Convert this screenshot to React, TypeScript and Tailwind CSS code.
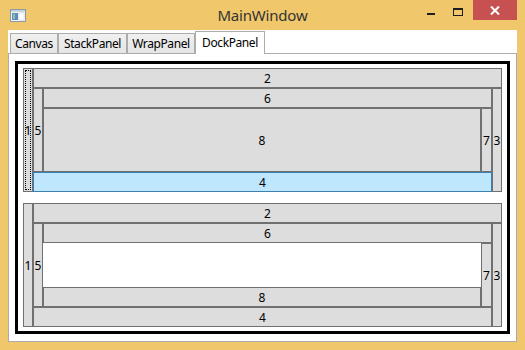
import React from "react";

const font = "font-['Noto_Sans','Open_Sans',sans-serif]";

function Btn({
  label,
  className = "",
  hover = false,
  focus = false,
}: {
  label: string;
  className?: string;
  hover?: boolean;
  focus?: boolean;
}) {
  return (
    <div
      className={`relative flex items-center justify-center overflow-hidden border text-[12px] leading-none text-black ${
        hover ? "border-[#3c7fb1] bg-[#bee6fd]" : "border-[#707070] bg-[#dddddd]"
      } ${className}`}
    >
      {focus && <div className="pointer-events-none absolute inset-[1px] border border-dotted border-black" />}
      <span className="pt-[1px]">{label}</span>
    </div>
  );
}

function FilledDock() {
  return (
    <div className="flex h-[124px]">
      <Btn label="1" className="w-[10px] shrink-0" focus />
      <div className="flex min-w-0 flex-1 flex-col">
        <Btn label="2" className="h-[20px] shrink-0" />
        <div className="flex min-h-0 flex-1">
          <div className="flex min-w-0 flex-1 flex-col">
            <div className="flex min-h-0 flex-1">
              <Btn label="5" className="w-[10px] shrink-0" />
              <div className="flex min-w-0 flex-1 flex-col">
                <Btn label="6" className="h-[20px] shrink-0" />
                <div className="flex min-h-0 flex-1">
                  <Btn label="8" className="min-w-0 flex-1" />
                  <Btn label="7" className="w-[11px] shrink-0" />
                </div>
              </div>
            </div>
            <Btn label="4" hover className="h-[20px] shrink-0" />
          </div>
          <Btn label="3" className="w-[10px] shrink-0" />
        </div>
      </div>
    </div>
  );
}

function OpenDock() {
  return (
    <div className="flex h-[124px]">
      <Btn label="1" className="w-[10px] shrink-0" />
      <div className="flex min-w-0 flex-1 flex-col">
        <Btn label="2" className="h-[20px] shrink-0" />
        <div className="flex min-h-0 flex-1">
          <div className="flex min-w-0 flex-1 flex-col">
            <div className="flex min-h-0 flex-1">
              <Btn label="5" className="w-[10px] shrink-0" />
              <div className="flex min-w-0 flex-1 flex-col">
                <Btn label="6" className="h-[20px] shrink-0" />
                <div className="flex min-h-0 flex-1">
                  <div className="flex min-w-0 flex-1 flex-col">
                    <div className="flex-1 bg-white" />
                    <Btn label="8" className="h-[20px] shrink-0" />
                  </div>
                  <Btn label="7" className="w-[11px] shrink-0" />
                </div>
              </div>
            </div>
            <Btn label="4" className="h-[20px] shrink-0" />
          </div>
          <Btn label="3" className="w-[10px] shrink-0" />
        </div>
      </div>
    </div>
  );
}

const tabs = [
  { label: "Canvas", w: "w-[48px]" },
  { label: "StackPanel", w: "w-[69px]" },
  { label: "WrapPanel", w: "w-[68px]" },
];

export default function App() {
  return (
    <div className={`flex h-[350px] w-[525px] flex-col bg-[#f0c86b] ${font}`}>
      {/* title bar */}
      <div className="grid h-[30px] shrink-0 grid-cols-[1fr_auto_1fr]">
        <div className="flex items-start pl-[10px] pt-[9px]">
          <svg width="16" height="13" viewBox="0 0 16 13">
            <rect x="0.5" y="0.5" width="15" height="12" fill="#f4f6f8" stroke="#8c98a4" />
            <rect x="1" y="1" width="14" height="2" fill="#c9d3dc" />
            <rect x="2" y="4" width="6" height="7" fill="#5b8fb9" />
            <rect x="3" y="5" width="2" height="5" fill="#8fc0a8" />
            <rect x="9" y="4" width="5" height="7" fill="#ffffff" stroke="#c2cad2" strokeWidth="0.5" />
          </svg>
        </div>
        <div className="pt-[5px] text-[15px] leading-[20px] tracking-[-0.2px] text-[#333333]">MainWindow</div>
        <div className="flex items-start justify-end pr-[8px]">
          <div className="mt-[13px] h-[2px] w-[8px] bg-[#1e1e1e]" />
          <div className="ml-[18px] mt-[8px] h-[8px] w-[10px] border border-t-2 border-[#1e1e1e]" />
          <div className="ml-[10px] flex h-[20px] w-[44px] items-center justify-center bg-[#c75050]">
            <svg width="10" height="9" viewBox="0 0 10 9">
              <path d="M1 0.5 L9 8.5 M9 0.5 L1 8.5" stroke="#ffffff" strokeWidth="2" />
            </svg>
          </div>
        </div>
      </div>

      {/* client area */}
      <div className="mx-[8px] flex h-[312px] flex-col bg-white">
        <div className="flex h-[23px] shrink-0 items-end pl-[2px]">
          {tabs.map((t) => (
            <div
              key={t.label}
              className={`flex h-[20px] ${t.w} items-center justify-center border border-b-0 border-[#acacac] bg-gradient-to-b from-[#f0f0f0] to-[#e5e5e5] text-[12px] tracking-[-0.4px] text-black`}
            >
              {t.label}
            </div>
          ))}
          <div className="relative z-10 -mb-[1px] flex h-[23px] w-[70px] items-center justify-center border border-b-0 border-[#acacac] bg-white pb-[1px] text-[12px] tracking-[-0.4px] text-black">
            DockPanel
          </div>
        </div>
        <div className="flex min-h-0 flex-1 flex-col border border-[#acacac] pb-[7px] pl-[6px] pr-[6px] pt-[7px]">
          <div className="flex flex-1 flex-col gap-[11px] border-[3px] border-black px-[5px] py-[4px]">
            <FilledDock />
            <OpenDock />
          </div>
        </div>
      </div>
    </div>
  );
}
